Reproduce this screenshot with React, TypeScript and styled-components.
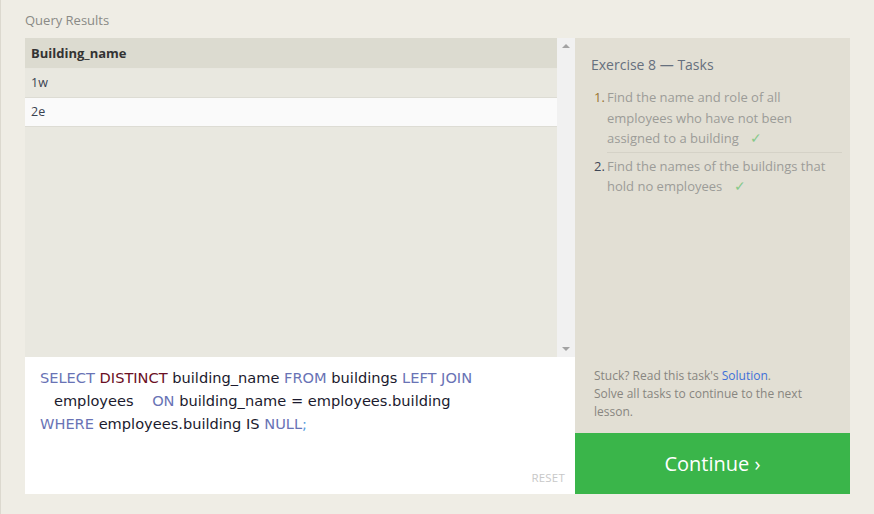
import styled, { createGlobalStyle } from 'styled-components';

const GlobalStyle = createGlobalStyle`
  html, body {
    margin: 0;
    padding: 0;
    background: #efede5;
  }
  body {
    font-family: 'Open Sans', 'Noto Sans', sans-serif;
    border-left: 1px solid #dcd9cf;
    min-height: 514px;
    box-sizing: border-box;
  }
`;

type Token = { text: string; kind?: 'kw' | 'dist' | 'id' | 'punct' };

const sqlLines: Token[][] = [
  [
    { text: 'SELECT', kind: 'kw' },
    { text: ' ' },
    { text: 'DISTINCT', kind: 'dist' },
    { text: ' building_name ' },
    { text: 'FROM', kind: 'kw' },
    { text: ' buildings ' },
    { text: 'LEFT JOIN', kind: 'kw' },
  ],
  [
    { text: '   employees    ' },
    { text: 'ON', kind: 'kw' },
    { text: ' building_name = employees.building' },
  ],
  [
    { text: 'WHERE', kind: 'kw' },
    { text: ' employees.building IS ' },
    { text: 'NULL', kind: 'kw' },
    { text: ';', kind: 'punct' },
  ],
];

const rows = ['1w', '2e'];

function App() {
  return (
    <>
      <GlobalStyle />
      <S.Page>
        <S.Label>Query Results</S.Label>
        <S.Grid>
          <S.LeftCol>
            <S.ResultsBox>
              <S.Table>
                <S.HeadRow>Building_name</S.HeadRow>
                {rows.map((r, i) => (
                  <S.Row key={r} $odd={i % 2 === 1}>
                    {r}
                  </S.Row>
                ))}
              </S.Table>
              <S.Scrollbar>
                <S.Arrow $dir="up" />
                <S.Arrow $dir="down" />
              </S.Scrollbar>
            </S.ResultsBox>
            <S.Editor>
              <S.Code>
                {sqlLines.map((line, i) => (
                  <S.CodeLine key={i}>
                    {line.map((t, j) => (
                      <S.Tok key={j} $kind={t.kind}>
                        {t.text}
                      </S.Tok>
                    ))}
                  </S.CodeLine>
                ))}
              </S.Code>
              <S.Reset>RESET</S.Reset>
            </S.Editor>
          </S.LeftCol>
          <S.RightCol>
            <S.Panel>
              <S.Title>Exercise 8 — Tasks</S.Title>
              <S.Tasks>
                <S.Task>
                  <S.Num $first>1.</S.Num>
                  <S.TaskText>
                    Find the name and role of all employees who have not been
                    assigned to a building <S.Check>✓</S.Check>
                  </S.TaskText>
                </S.Task>
                <S.Task>
                  <S.Num>2.</S.Num>
                  <S.TaskText>
                    Find the names of the buildings that hold no employees{' '}
                    <S.Check>✓</S.Check>
                  </S.TaskText>
                </S.Task>
              </S.Tasks>
              <S.Help>
                Stuck? Read this task's <S.Link>Solution</S.Link>.
                <br />
                Solve all tasks to continue to the next lesson.
              </S.Help>
            </S.Panel>
            <S.Continue>Continue ›</S.Continue>
          </S.RightCol>
        </S.Grid>
      </S.Page>
    </>
  );
}

export default App;

const S = {
  Page: styled.div`
    padding: 11px 0 0 24px;
  `,
  Label: styled.div`
    font-size: 13px;
    color: #8a8a86;
    height: 27px;
  `,
  Grid: styled.div`
    display: grid;
    grid-template-columns: 550px 275px;
    height: 456px;
  `,
  LeftCol: styled.div`
    display: flex;
    flex-direction: column;
  `,
  ResultsBox: styled.div`
    display: flex;
    height: 319px;
  `,
  Table: styled.div`
    flex: 1;
    background: #e9e8e0;
  `,
  HeadRow: styled.div`
    height: 30px;
    line-height: 30px;
    padding-left: 6px;
    background: #dcdbd0;
    font-weight: 700;
    font-size: 13px;
    color: #333;
    border-bottom: 1px solid #e8e7df;
  `,
  Row: styled.div<{ $odd?: boolean }>`
    height: 28px;
    line-height: 28px;
    padding-left: 6px;
    font-size: 12.5px;
    color: #3a4250;
    background: ${(p) => (p.$odd ? '#fafafa' : '#e9e8e0')};
    border-bottom: 1px solid #dddcd4;
  `,
  Scrollbar: styled.div`
    width: 18px;
    background: #f1f1f1;
    display: flex;
    flex-direction: column;
    justify-content: space-between;
    align-items: center;
    padding: 6px 0;
    box-sizing: border-box;
  `,
  Arrow: styled.div<{ $dir: 'up' | 'down' }>`
    width: 0;
    height: 0;
    border-left: 4px solid transparent;
    border-right: 4px solid transparent;
    ${(p) =>
      p.$dir === 'up'
        ? 'border-bottom: 4px solid #a3a3a3;'
        : 'border-top: 4px solid #a3a3a3;'}
  `,
  Editor: styled.div`
    flex: 1;
    background: #fff;
    position: relative;
    padding: 9px 15px;
  `,
  Code: styled.div`
    font-family: 'DejaVu Sans', sans-serif;
    font-size: 14.6px;
    line-height: 23px;
    color: #1b1a2e;
  `,
  CodeLine: styled.div`
    white-space: pre;
  `,
  Tok: styled.span<{ $kind?: string }>`
    color: ${(p) =>
      p.$kind === 'kw'
        ? '#6973b5'
        : p.$kind === 'dist'
          ? '#6b0f24'
          : p.$kind === 'punct'
            ? '#5aa0e0'
            : 'inherit'};
  `,
  Reset: styled.div`
    position: absolute;
    right: 10px;
    bottom: 9px;
    font-size: 11.5px;
    color: #c8c8c8;
    letter-spacing: 0.2px;
  `,
  RightCol: styled.div`
    display: flex;
    flex-direction: column;
  `,
  Panel: styled.div`
    flex: 1;
    background: #e2dfd4;
    padding: 17px 8px 0 16px;
    display: flex;
    flex-direction: column;
  `,
  Title: styled.div`
    font-size: 14px;
    color: #66707e;
    margin-bottom: 13px;
  `,
  Tasks: styled.div`
    flex: 1;
    padding-left: 3px;
  `,
  Task: styled.div`
    display: flex;
    font-size: 13px;
    line-height: 20.5px;
    & + & {
      border-top: 1px solid #d5d2c7;
      margin-left: 13px;
      padding-top: 3px;
      margin-top: 3px;
    }
    & + & > span:first-child {
      margin-left: -13px;
    }
  `,
  Num: styled.span<{ $first?: boolean }>`
    width: 13px;
    flex: none;
    color: ${(p) => (p.$first ? '#9a7632' : '#3e4655')};
  `,
  TaskText: styled.div`
    color: #9c9c98;
  `,
  Check: styled.span`
    color: #86c98a;
    margin-left: 8px;
    font-size: 14px;
    line-height: 1;
  `,
  Help: styled.div`
    font-size: 12px;
    line-height: 18px;
    color: #888680;
    padding: 0 10px 12px 3px;
  `,
  Link: styled.span`
    color: #3f6fd8;
  `,
  Continue: styled.div`
    height: 61px;
    background: #3ab54a;
    color: #fff;
    font-size: 20px;
    display: flex;
    align-items: center;
    justify-content: center;
  `,
};
